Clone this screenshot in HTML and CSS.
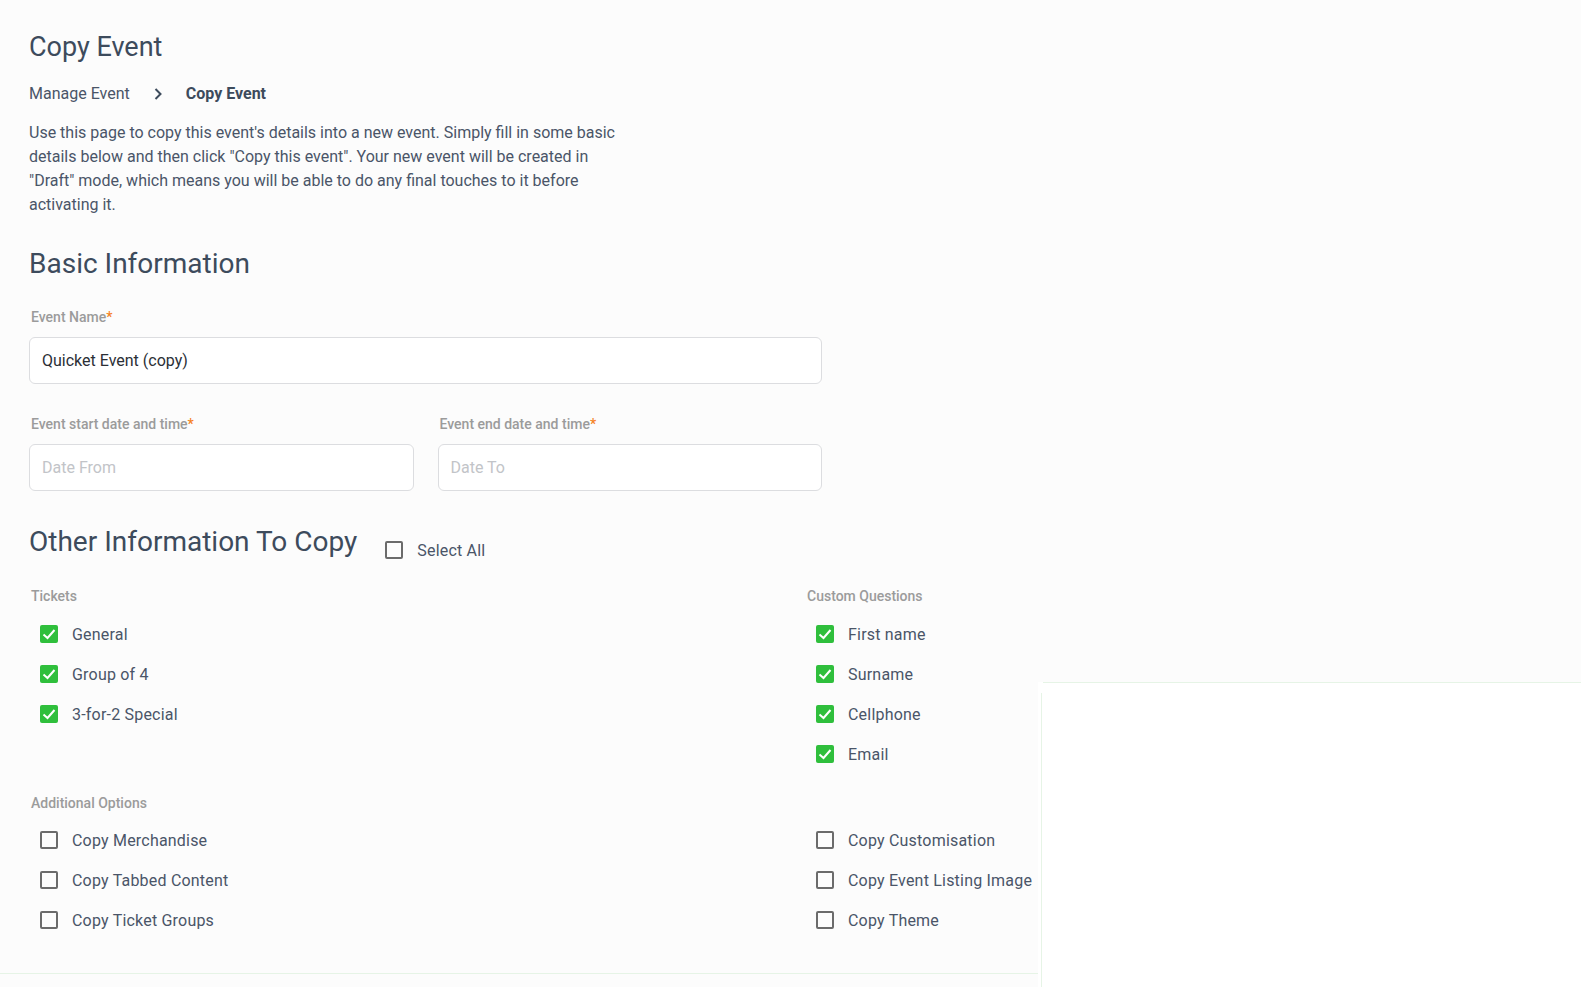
FILE: index.html
```html
<!DOCTYPE html>
<html lang="en">
  <head>
    <meta charset="UTF-8" />
    <meta name="viewport" content="width=device-width, initial-scale=1.0" />
    <title>Copy Event</title>
    <link rel="stylesheet" href="styles.css">
  </head>
  <body>
    <div class="page">
      <h1 class="page-title">Copy Event</h1>
      <div class="breadcrumb">
        <span>Manage Event</span>
        <svg class="crumb-sep" viewBox="0 0 10 14" width="10" height="14">
          <path d="M2.5 2 L7.5 7 L2.5 12" fill="none" stroke="#3d4b5c" stroke-width="2" />
        </svg>
        <span class="current">Copy Event</span>
      </div>
      <p class="intro">
        Use this page to copy this event's details into a new event. Simply fill in some basic
        details below and then click "Copy this event". Your new event will be created in
        "Draft" mode, which means you will be able to do any final touches to it before
        activating it.
      </p>

      <form class="copy-form">
        <h2 class="section-title">Basic Information</h2>

        <div class="field">
          <label>Event Name<span class="req">*</span></label>
          <input type="text" value="Quicket Event (copy)" />
        </div>

        <div class="field-row">
          <div class="field">
            <label>Event start date and time<span class="req">*</span></label>
            <input type="text" placeholder="Date From" />
          </div>
          <div class="field">
            <label>Event end date and time<span class="req">*</span></label>
            <input type="text" placeholder="Date To" />
          </div>
        </div>

        <div class="section-head">
          <h2 class="section-title">Other Information To Copy</h2>
          <div class="check select-all"><span class="box"></span>Select All</div>
        </div>

        <div class="options">
          <div class="group">
            <div class="group-label">Tickets</div>
            <div class="check"><span class="box on"></span>General</div>
            <div class="check"><span class="box on"></span>Group of 4</div>
            <div class="check"><span class="box on"></span>3-for-2 Special</div>
          </div>
          <div class="group">
            <div class="group-label">Custom Questions</div>
            <div class="check"><span class="box on"></span>First name</div>
            <div class="check"><span class="box on"></span>Surname</div>
            <div class="check"><span class="box on"></span>Cellphone</div>
            <div class="check"><span class="box on"></span>Email</div>
          </div>
        </div>

        <div class="group additional">
          <div class="group-label">Additional Options</div>
          <div class="options">
            <div class="group">
              <div class="check"><span class="box"></span>Copy Merchandise</div>
              <div class="check"><span class="box"></span>Copy Tabbed Content</div>
              <div class="check"><span class="box"></span>Copy Ticket Groups</div>
            </div>
            <div class="group">
              <div class="check"><span class="box"></span>Copy Customisation</div>
              <div class="check"><span class="box"></span>Copy Event Listing Image</div>
              <div class="check"><span class="box"></span>Copy Theme</div>
            </div>
          </div>
        </div>
      </form>
    </div>

    <!-- sheet sliding in over the bottom right -->
    <div class="side-sheet"></div>
  </body>
</html>
```

FILE: styles.css
```css
body {
  margin: 0;
  background-color: #fcfcfc;
  font-family: Roboto, "Liberation Sans", sans-serif;
  color: #4a5568;
  overflow: hidden;
}

.page {
  padding: 30px 0 0 29px;
}

.page-title {
  margin: 0;
  font-size: 27px;
  font-weight: 400;
  line-height: 34px;
  color: #3d4b5c;
}

.breadcrumb {
  display: flex;
  align-items: center;
  margin-top: 18px;
  font-size: 16px;
  line-height: 24px;
  color: #4a5568;
}

.crumb-sep {
  margin: 0 23px 0 23px;
}

.breadcrumb .current {
  font-weight: 700;
  color: #3d4b5c;
}

.intro {
  width: 600px;
  margin: 15px 0 0;
  font-size: 16px;
  line-height: 24px;
}

.copy-form {
  margin-left: -29px;
  padding: 0 0 41px 29px;
  border-bottom: 1px solid #e6f4e6;
}

.section-title {
  margin: 30px 0 0;
  font-size: 28px;
  font-weight: 400;
  line-height: 34px;
  color: #3d4b5c;
}

.field {
  display: flex;
  flex-direction: column;
  width: 793px;
  margin-top: 26px;
}

.field label {
  margin-left: 2px;
  font-size: 14px;
  font-weight: 500;
  line-height: 20px;
  color: #9b9b9b;
}

.req {
  color: #f5821f;
}

.field input {
  box-sizing: border-box;
  height: 47px;
  margin-top: 10px;
  padding: 0 12px;
  border: 1px solid #dcdde0;
  border-radius: 6px;
  background: #fff;
  font-family: inherit;
  font-size: 16px;
  color: #2b2f36;
}

.field input::placeholder {
  color: #c2c4c8;
}

.field-row {
  display: flex;
  gap: 24px;
  width: 793px;
  margin-top: 30px;
}

.field-row .field {
  flex: 1;
  width: auto;
  margin-top: 0;
}

.section-head {
  display: flex;
  align-items: center;
  margin-top: 31px;
}

.section-head .section-title {
  margin: 0;
}

.select-all {
  margin: 12px 0 0 28px;
  height: 24px;
}

.options {
  display: grid;
  grid-template-columns: 776px 1fr;
  margin-top: 24px;
}

.group-label {
  margin-left: 2px;
  font-size: 14px;
  font-weight: 500;
  line-height: 20px;
  color: #9b9b9b;
}

.group .check:first-of-type {
  margin-top: 15px;
}

.check {
  display: flex;
  align-items: center;
  height: 24px;
  margin-top: 16px;
  padding-left: 11px;
  font-size: 16px;
  color: #4a5568;
  letter-spacing: 0.2px;
}

.check .box {
  box-sizing: border-box;
  flex: none;
  width: 18px;
  height: 18px;
  margin-right: 14px;
  border: 2px solid #6b6b6b;
  border-radius: 2px;
}

.check .box.on {
  border: none;
  background-color: #2fbf3c;
  background-image: url("data:image/svg+xml,%3Csvg xmlns='http://www.w3.org/2000/svg' viewBox='0 0 18 18'%3E%3Cpath d='M3.5 9.5 L7.5 13 L14.5 5' fill='none' stroke='white' stroke-width='2'/%3E%3C/svg%3E");
}

.select-all {
  padding-left: 0;
}

.additional {
  margin-top: 27px;
}

.additional .options {
  margin-top: 0;
}

.side-sheet {
  position: absolute;
  left: 1038px;
  top: 682px;
  right: 0;
  bottom: 0;
  background: #fff;
}

.side-sheet::before {
  content: "";
  position: absolute;
  left: 5px;
  right: 0;
  top: 0;
  border-top: 1px solid #e6f4e6;
}

.side-sheet::after {
  content: "";
  position: absolute;
  left: 3px;
  top: 11px;
  bottom: 0;
  border-left: 1px solid #e6f4e6;
}
```
